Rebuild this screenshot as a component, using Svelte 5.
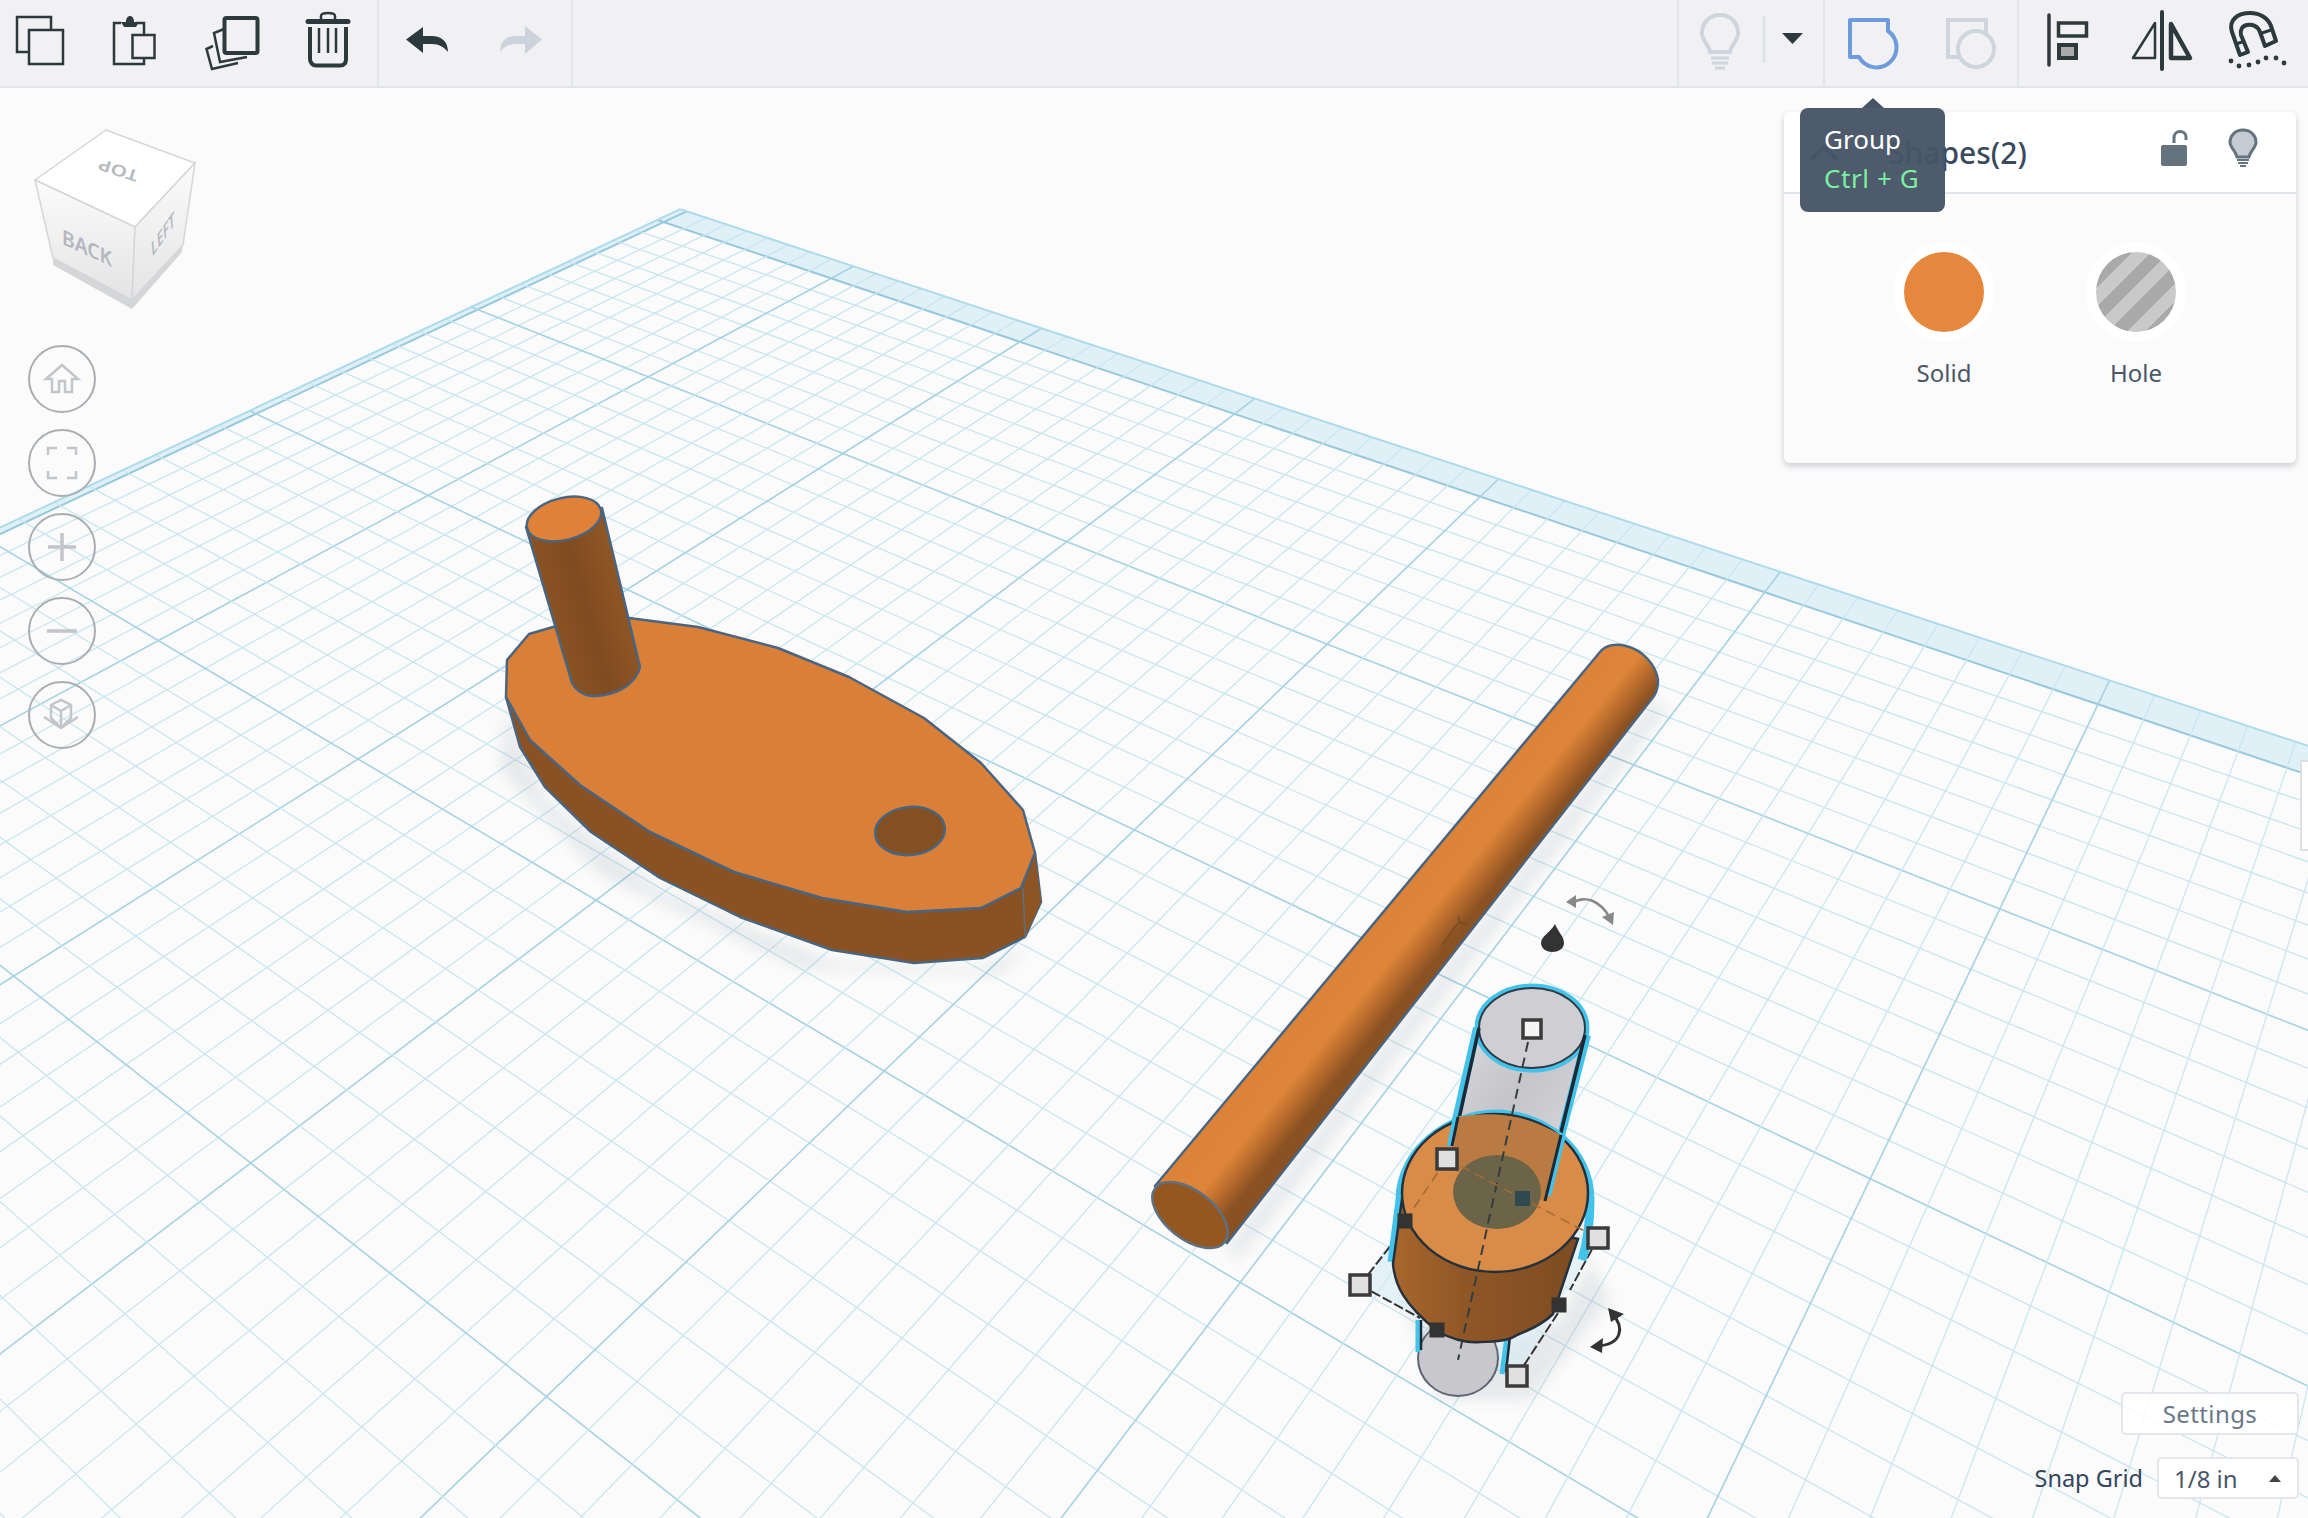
<script>
	// grid coordinates (in major cells) -> screen px, read off the reference
	const marks = [
		[0, 0, 668, 221],
		[1, 0, 825, 275], [4, 0, 1478, 496], [5, 0, 1764, 595], [6, 0, 2099, 708],
		[0, 1, 482, 309], [1, 1, 643, 372], [5, 1, 1634, 764], [6, 1, 2004, 911],
		[0, 2, 260, 415], [1, 2, 423, 487], [6, 2, 1878, 1177],
		[0, 3, -18, 551],
		[1, 3, 153, 629], [2, 3, 350, 752], [3, 3, 600, 890], [4, 3, 893, 1063],
		[2, 4, 13, 962], [3, 4, 256, 1151], [4, 4, 558, 1386]
	];

	// the plane's two visible edges count for more, they are what the eye checks
	const edges = marks.filter(([u, v]) => u === 0 || v === 0);

	function fit(pairs) {
		const n = 8;
		const m = Array.from({ length: n }, () => Array(n + 1).fill(0));
		for (const [u, v, x, y] of pairs) {
			const rows = [
				[u, v, 1, 0, 0, 0, -u * x, -v * x, x],
				[0, 0, 0, u, v, 1, -u * y, -v * y, y]
			];
			for (const r of rows)
				for (let i = 0; i < n; i++) for (let j = 0; j <= n; j++) m[i][j] += r[i] * r[j];
		}
		for (let i = 0; i < n; i++) {
			let p = i;
			for (let k = i + 1; k < n; k++) if (Math.abs(m[k][i]) > Math.abs(m[p][i])) p = k;
			[m[i], m[p]] = [m[p], m[i]];
			for (let k = 0; k < n; k++) {
				if (k === i) continue;
				const f = m[k][i] / m[i][i];
				for (let j = i; j <= n; j++) m[k][j] -= f * m[i][j];
			}
		}
		return m.map((r, i) => r[n] / r[i]);
	}

	const h = fit([...marks, ...edges, ...edges, ...edges, ...edges, ...edges]);
	const weight = (u, v) => h[6] * u + h[7] * v + 1;
	const project = (u, v) => {
		const w = weight(u, v);
		return [(h[0] * u + h[1] * v + h[2]) / w, (h[3] * u + h[4] * v + h[5]) / w];
	};
	const quad = (pts) => pts.map(([u, v]) => project(u, v).map((n) => n.toFixed(1)).join(',')).join(' ');

	const cell = 1 / 8;
	const minW = 0.07;
	// the rim is wider along the far edge than along the left one
	const rimU = -0.04;
	const rimV = -0.135;
	const gridLines = [];
	for (let i = 0; i <= 14 * 8; i++) {
		const t = i * cell;
		const kind = i === 0 ? 'edge' : i % 8 === 0 ? 'major' : 'minor';
		const vEnd = Math.min(9, (minW - 1 - h[6] * t) / h[7]);
		if (vEnd > rimV) {
			const [x1, y1] = project(t, rimV);
			const [x2, y2] = project(t, vEnd);
			gridLines.push({ x1, y1, x2, y2, kind });
		}
		const uEnd = Math.min(14, (minW - 1 - h[7] * t) / h[6]);
		if (uEnd > rimU && i <= 9 * 8) {
			const [x1, y1] = project(rimU, t);
			const [x2, y2] = project(uEnd, t);
			gridLines.push({ x1, y1, x2, y2, kind });
		}
	}

	const bandTop = quad([[rimU, rimV], [11, rimV], [11, 0], [0, 0]]);
	const bandLeft = quad([[rimU, rimV], [0, 0], [0, 5.5], [rimU, 5.5]]);
	const outerA = project(rimU, rimV);
	const outerB = project(11, rimV);
	const outerC = project(rimU, 5.5);

	const whiteHandles = [[1447, 1159], [1598, 1238], [1360, 1285], [1517, 1376]];
	const darkHandles = [[1405, 1221], [1437, 1330], [1559, 1305]];
	const magnetDots = [[2231, 61], [2239, 66], [2249, 65], [2258, 62], [2266, 58], [2276, 58], [2284, 63]];
</script>

<div class="app">
	<header class="toolbar">
		<div class="group edit">
			<button aria-label="Copy">
				<svg class="icon" viewBox="8 0 64 86">
					<rect x="17" y="17" width="34" height="35" class="line" />
					<rect x="29" y="30" width="34" height="34" class="line filled" />
				</svg>
			</button>
			<button aria-label="Paste">
				<svg class="icon" viewBox="102 0 64 86">
					<path d="M121 23H114V64H144V58" class="line" />
					<path d="M144 34V23H136" class="line" />
					<path d="M121 22H126C126 14 134 14 134 22H139L136 27H124Z" fill="#2c3a3d" />
					<rect x="132.500" y="35" width="22" height="23" class="line filled" />
				</svg>
			</button>
			<button aria-label="Duplicate">
				<svg class="icon" viewBox="196 0 64 86">
					<path d="M213 46L206.500 49L212 69L238 63" class="line" />
					<path d="M224 29L214 33L220 62L247 57" class="line filled" />
					<rect x="224.500" y="18" width="33" height="35" rx="2" class="thick filled" />
				</svg>
			</button>
			<button aria-label="Delete">
				<svg class="icon" viewBox="290 0 64 86">
					<path d="M321 20V16C321 12 335 12 335 16V20" class="line" />
					<path d="M308 21.500H348" fill="none" stroke="#2c3a3d" stroke-width="5" stroke-linecap="round" />
					<path d="M310 27V59C310 63 313 65.500 316 65.500H340C344 65.500 346 63 346 59V27" class="thick" />
					<path d="M319 28V53M328 28V53M336 28V53" fill="none" stroke="#2c3a3d" stroke-width="2.500" />
				</svg>
			</button>
		</div>
		<div class="group history">
			<button aria-label="Undo">
				<svg class="icon" viewBox="394 0 64 86">
					<path d="M423 27L406 39.500L423 53V44H432C439 44 444 47 448 52C448 41 441 36 432 36H423Z" fill="#2c3a3d" />
				</svg>
			</button>
			<button aria-label="Redo">
				<svg class="icon" viewBox="488 0 64 86">
					<path d="M525 26L542 39.500L525 54V44H516C509 44 504 47 500 52C500 41 507 36 516 36H525Z" fill="#ccd3dc" />
				</svg>
			</button>
		</div>
		<div class="spacer"></div>
		<div class="group notes">
			<button aria-label="Notes">
				<svg class="icon" viewBox="1688 0 64 86">
					<path d="M1720 15C1709 15 1702 23 1702 33C1702 41 1709 45 1710 52H1730C1731 45 1738 41 1738 33C1738 23 1731 15 1720 15Z" fill="none" stroke="#cdd5de" stroke-width="4" />
					<path d="M1711 58H1729M1712 63H1728M1715 68H1725" fill="none" stroke="#cdd5de" stroke-width="3" />
				</svg>
			</button>
			<button aria-label="Notes menu">
				<svg class="icon wide" viewBox="1752 0 71 86">
					<rect x="1762.500" y="16" width="3" height="47" rx="1.500" fill="#dde2e8" />
					<path d="M1782 33H1803L1792.500 44Z" fill="#2c3a3d" />
				</svg>
			</button>
		</div>
		<div class="group grouping">
			<button aria-label="Group">
				<svg class="icon" viewBox="1841 0 64 86">
					<path d="M1850 20H1888V31A20 20 0 1 1 1859 57H1850Z" fill="none" stroke="#6d9bdc" stroke-width="4" stroke-linejoin="round" />
				</svg>
			</button>
			<button aria-label="Ungroup">
				<svg class="icon" viewBox="1940 0 64 86">
					<rect x="1948" y="20" width="38" height="37" fill="none" stroke="#cdd5de" stroke-width="4" />
					<circle cx="1976" cy="49" r="18" fill="#f1f1f3" stroke="#cdd5de" stroke-width="4" />
				</svg>
			</button>
		</div>
		<div class="group arrange">
			<button aria-label="Align">
				<svg class="icon" viewBox="2039 0 64 86">
					<path d="M2049 15V65" fill="none" stroke="#2c3a3d" stroke-width="3.500" stroke-linecap="round" />
					<rect x="2058.500" y="23" width="28" height="13" fill="none" stroke="#2c3a3d" stroke-width="3.500" />
					<rect x="2059" y="45" width="17" height="13" fill="#aaaaaa" stroke="#2c3a3d" stroke-width="4" />
				</svg>
			</button>
			<button aria-label="Mirror">
				<svg class="icon" viewBox="2131 0 64 86">
					<path d="M2162 12V69" fill="none" stroke="#2c3a3d" stroke-width="4" stroke-linecap="round" />
					<path d="M2155 23L2133 58H2155Z" fill="none" stroke="#2c3a3d" stroke-width="2.500" stroke-linejoin="round" />
					<path d="M2171 24L2190 58H2171Z" fill="none" stroke="#2c3a3d" stroke-width="4.500" stroke-linejoin="round" />
				</svg>
			</button>
			<button aria-label="Snap">
				<svg class="icon" viewBox="2223 0 64 86">
					<path d="M2240 55L2232 32C2228 19 2239 13 2250 13C2260 13 2268 18 2271 26L2276 41L2265 46L2260 32C2258 26 2252 24 2247 25C2242 26 2240 30 2241 35L2248 52Z" fill="none" stroke="#2c3a3d" stroke-width="4" stroke-linejoin="round" />
					<path d="M2236 44L2245 41M2259 34L2271 30" fill="none" stroke="#2c3a3d" stroke-width="3" />
					{#each magnetDots as [cx, cy]}
						<circle {cx} {cy} r="2.400" fill="#2c3a3d" />
					{/each}
				</svg>
			</button>
		</div>
	</header>

	<main class="stage">
		<svg class="scene" viewBox="0 88 2308 1430">
			<defs>
				<linearGradient id="rod" gradientUnits="userSpaceOnUse" x1="1378" y1="920" x2="1432" y2="964">
					<stop offset="0" stop-color="#dc8338" />
					<stop offset="0.5" stop-color="#de8539" />
					<stop offset="0.72" stop-color="#bc6e2e" />
					<stop offset="1" stop-color="#8a5122" />
				</linearGradient>
				<linearGradient id="peg" gradientUnits="userSpaceOnUse" x1="535" y1="600" x2="625" y2="575">
					<stop offset="0" stop-color="#8e5524" />
					<stop offset="0.5" stop-color="#7f4b20" />
					<stop offset="1" stop-color="#935825" />
				</linearGradient>
				<linearGradient id="disk" gradientUnits="userSpaceOnUse" x1="1393" y1="1300" x2="1578" y2="1300">
					<stop offset="0" stop-color="#a8672c" />
					<stop offset="0.4" stop-color="#8f5626" />
					<stop offset="1" stop-color="#7d4c22" />
				</linearGradient>
				<linearGradient id="tube" gradientUnits="userSpaceOnUse" x1="1470" y1="1060" x2="1560" y2="1120">
					<stop offset="0" stop-color="#d2d2d6" />
					<stop offset="0.5" stop-color="#c4c4c9" />
					<stop offset="1" stop-color="#d0d0d4" />
				</linearGradient>
				<linearGradient id="cubeface" x1="0" y1="0" x2="0" y2="1">
					<stop offset="0" stop-color="#fbfbfb" />
					<stop offset="1" stop-color="#e4e4e6" />
				</linearGradient>
			</defs>

			<polygon points={bandTop} class="band" />
			<polygon points={bandLeft} class="band" />
			{#each gridLines as l}
				<line x1={l.x1} y1={l.y1} x2={l.x2} y2={l.y2} class={l.kind} />
			{/each}
			<line x1={outerA[0]} y1={outerA[1]} x2={outerB[0]} y2={outerB[1]} class="rim" />
			<line x1={outerA[0]} y1={outerA[1]} x2={outerC[0]} y2={outerC[1]} class="rim" />

			<!-- soft shadows on the floor -->
			<polygon class="soft" points="506,705 545,800 660,890 832,962 983,968 1030,945 1000,975 800,968 600,875 500,770" />
			<polygon class="soft" points="1654,700 1225,1250 1240,1258 1668,708" />
			<polygon class="soft" points="1400,1290 1480,1355 1560,1320 1590,1260 1610,1300 1530,1400 1440,1400" />

			<!-- flat disk with peg and hole -->
			<polygon class="outline" fill="#8a5222" points="506,697 520,747 545,787 591,832 660,878 740,917 832,950 914,963 983,958 1025,937 1041,902 1035,853 1021,888 981,908 907,912 822,898 734,872 650,832 580,785 530,740" />
			<polygon fill="#8e5524" points="1023,888 1035,853 1041,902 1025,937" />
			<line x1="1023" y1="888" x2="1025" y2="937" stroke="#5d6f80" stroke-width="1.500" />
			<polygon class="outline" fill="#da7f37" points="529,634 507,660 506,697 530,740 580,785 650,832 734,872 822,898 907,912 981,908 1021,888 1035,853 1023,810 981,763 924,718 849,677 778,648 698,627 629,618 553,627" />
			<ellipse class="outline" cx="910" cy="831" rx="35" ry="24" fill="#845022" transform="rotate(-6 910 831)" />
			<path class="outline" fill="url(#peg)" d="M526 527L572 683C580 697 592 697 604 695C622 692 636 682 640 667L602 508Z" />
			<ellipse class="outline" cx="564" cy="519" rx="38" ry="21" fill="#df8237" transform="rotate(-14 564 519)" />

			<!-- long rod -->
			<path class="outline" fill="url(#rod)" d="M1155 1186L1600 652C1606 645 1616 643 1626 646C1642 650 1656 664 1658 680C1658 688 1656 693 1654 696L1227 1243Z" />
			<ellipse cx="1190" cy="1215" rx="44" ry="24" fill="#94571f" stroke="#5f7083" stroke-width="2.500" transform="rotate(38 1190 1215)" />
			<path d="M1442 945C1450 936 1452 928 1460 922M1460 922L1466 925M1460 922L1458 916" fill="none" stroke="#6a4522" stroke-width="1.800" opacity="0.6" />

			<!-- selection footprint -->
			<polygon points="1360,1285 1447,1159 1598,1238 1517,1376" fill="#d6ebf5" opacity="0.6" />
			<path d="M1360 1285L1395 1240M1360 1285L1420 1318M1517 1376L1560 1310M1598 1238L1570 1290" fill="none" stroke="#333" stroke-width="2" stroke-dasharray="10 3" />

			<!-- lower stub of the selected hole -->
			<ellipse cx="1458" cy="1358" rx="40" ry="38" fill="#c8c8cc" stroke="#5d6672" stroke-width="2" />
			<path d="M1418 1320V1352M1507 1336L1502 1374" fill="none" stroke="#44c3ea" stroke-width="5" />
			<path d="M1421 1320V1350M1510 1336L1506 1372" fill="none" stroke="#1b2a36" stroke-width="2.500" />

			<!-- selected tube behind the disk -->
			<path fill="url(#tube)" d="M1478 1028L1452 1146L1545 1201L1585 1035Z" />
			<ellipse cx="1532" cy="1028" rx="53" ry="40" fill="#cfcfd3" stroke="#44c3ea" stroke-width="9" />
			<path d="M1477 1028L1450 1146M1587 1035L1546 1194" fill="none" stroke="#44c3ea" stroke-width="8" />
			<ellipse cx="1532" cy="1028" rx="53" ry="40" fill="#cfcfd3" stroke="#2e3a46" stroke-width="2" />
			<path d="M1479 1028L1453 1146M1585 1035L1544 1201" fill="none" stroke="#1b2a36" stroke-width="3.500" />

			<!-- cut disk -->
			<path d="M1400 1200C1400 1150 1450 1114 1495 1114C1545 1114 1590 1150 1590 1200C1590 1220 1588 1240 1582 1260M1400 1200L1392 1262" fill="none" stroke="#44c3ea" stroke-width="9" />
			<path fill="url(#disk)" stroke="#24313c" stroke-width="2.500" d="M1402 1199L1393 1264C1395 1285 1403 1303 1437 1331C1455 1341 1470 1343 1480 1342C1495 1342 1510 1340 1517 1335C1535 1328 1545 1322 1553 1314L1578 1239Z" />
			<ellipse cx="1495" cy="1193" rx="93" ry="79" fill="#d98c48" stroke="#24313c" stroke-width="2.500" />
			<path d="M1458 1117C1490 1111 1525 1114 1561 1135L1545 1201L1452 1170Z" fill="#b97b42" />
			<ellipse cx="1497" cy="1192" rx="44" ry="37" fill="#6b6448" />
			<path d="M1455 1117L1449 1146M1564 1135L1549 1196" fill="none" stroke="#44c3ea" stroke-width="4" />
			<path d="M1458 1117L1452 1146M1561 1135L1545 1201" fill="none" stroke="#1b2a36" stroke-width="3" />

			<!-- gizmo dashes and handles -->
			<path d="M1528 1042L1458 1360" fill="none" stroke="#333d40" stroke-width="2" stroke-dasharray="10 6" />
			<path d="M1447 1159L1598 1238" fill="none" stroke="#a86a35" stroke-width="1.500" stroke-dasharray="10 6" />
			<path d="M1405 1221L1447 1159" fill="none" stroke="#a86a35" stroke-width="1.500" stroke-dasharray="10 6" />
			{#each whiteHandles as [x, y]}
				<rect x={x - 10} y={y - 10} width="20" height="20" class="handle" />
			{/each}
			<rect x="1523" y="1020" width="18" height="18" class="handle hollow" />
			{#each darkHandles as [x, y]}
				<rect x={x - 7.5} y={y - 7.5} width="15" height="15" fill="#333" />
			{/each}
			<rect x="1515" y="1191" width="15" height="15" fill="#2f4a4e" />

			<!-- rotate arrows and lift cone -->
			<path d="M1572 903C1585 895 1600 900 1610 918" fill="none" stroke="#888" stroke-width="2.500" />
			<path d="M1566 902L1576 895L1576 908ZM1613 925L1602 917L1614 912Z" fill="#888" />
			<path d="M1555 924C1558 932 1564 936 1564 943C1564 949 1558 952 1552 952C1546 952 1541 948 1541 943C1541 936 1551 932 1555 924Z" fill="#333" />
			<path d="M1612 1313C1625 1328 1622 1344 1598 1346" fill="none" stroke="#333" stroke-width="3" />
			<path d="M1608 1308L1624 1314L1611 1322ZM1590 1347L1603 1338L1602 1353Z" fill="#333" />

			<!-- view cube -->
			<polygon points="53,258 132,300 183,245 182,252 132,309 53,265" fill="#d5d6d8" />
			<polygon points="106,130 195,163 135,227 35,180" fill="#ffffff" stroke="#d4d6d8" stroke-width="1.500" />
			<polygon points="35,180 135,227 132,300 53,258" fill="url(#cubeface)" stroke="#d4d6d8" stroke-width="1.500" />
			<polygon points="135,227 195,163 183,245 132,300" fill="url(#cubeface)" stroke="#d4d6d8" stroke-width="1.500" />
			<text class="cube-text" transform="translate(118 171) rotate(198) scale(1 0.75)" text-anchor="middle" dominant-baseline="central">TOP</text>
			<text class="cube-text" transform="matrix(0.92 0.42 0 1 87 247)" text-anchor="middle" dominant-baseline="central">BACK</text>
			<text class="cube-text" transform="matrix(0.5 -0.72 0.08 0.9 163 233)" text-anchor="middle" dominant-baseline="central">LEFT</text>
		</svg>

		<nav class="nav">
			<button aria-label="Home">
				<svg viewBox="0 0 40 40" width="40" height="40">
					<path d="M20 6L4 20H10V33H17V22H23V33H30V20H36Z" />
				</svg>
			</button>
			<button aria-label="Fit">
				<svg viewBox="0 0 40 40" width="40" height="40">
					<path d="M6 12V5H15M25 5H34V12M34 28V35H25M15 35H6V28" />
				</svg>
			</button>
			<button aria-label="Zoom in">
				<svg viewBox="0 0 40 40" width="40" height="40">
					<path d="M20 6V34M6 20H34" class="bold" />
				</svg>
			</button>
			<button aria-label="Zoom out">
				<svg viewBox="0 0 40 40" width="40" height="40">
					<path d="M5 20H35" class="bold" />
				</svg>
			</button>
			<button aria-label="Perspective">
				<svg viewBox="0 0 40 40" width="40" height="40">
					<path d="M19 5L9 10V23L19 33L29 23V10ZM9 10L19 16L29 10M19 16V33M2 22L19 33L36 22" />
				</svg>
			</button>
		</nav>

		<aside class="inspector">
			<div class="inspector-head">
				<svg class="chevron" viewBox="0 0 28 16" width="28" height="16">
					<path d="M2 15L14 3L26 15" />
				</svg>
				<span class="title">Shapes(2)</span>
				<svg class="lock" viewBox="0 0 28 38" width="28" height="38">
					<path d="M14 13V8C14 -1 26 0 26 7V10" fill="none" stroke="#65737f" stroke-width="3" />
					<rect x="1" y="15" width="26" height="21" rx="2" fill="#65737f" />
				</svg>
				<svg class="bulb" viewBox="0 0 30 40" width="30" height="40">
					<path d="M15 2C7 2 2 8 2 14C2 20 8 23 9 29H21C22 23 28 20 28 14C28 8 23 2 15 2Z" fill="#c5cbd2" stroke="#65737f" stroke-width="3" />
					<path d="M9 32H21M10 35H20M12 38H18" stroke="#65737f" stroke-width="2" />
				</svg>
			</div>
			<div class="kinds">
				<div class="kind">
					<span class="swatch"><span class="solid"></span></span>
					<span class="label">Solid</span>
				</div>
				<div class="kind">
					<span class="swatch"><span class="hole"></span></span>
					<span class="label">Hole</span>
				</div>
			</div>
		</aside>

		<div class="tooltip">
			<span class="tip-title">Group</span>
			<span class="tip-key">Ctrl + G</span>
		</div>

		<div class="side-tab"></div>

		<div class="grid-settings">
			<button class="settings">Settings</button>
			<div class="snap">
				<span class="snap-label">Snap Grid</span>
				<div class="select">
					<span>1/8 in</span>
					<i class="caret"></i>
				</div>
			</div>
		</div>
	</main>
</div>

<style>
	:global(body) {
		margin: 0;
		background: #fbfbfb;
		font-family: "Noto Sans", sans-serif;
	}

	.app {
		width: 2308px;
		height: 1518px;
		display: flex;
		flex-direction: column;
		overflow: hidden;
	}

	button {
		border: none;
		background: none;
		padding: 0;
		margin: 0;
		font: inherit;
		display: block;
	}

	.toolbar {
		height: 88px;
		box-sizing: border-box;
		flex: none;
		display: flex;
		background: #f1f1f3;
		border-bottom: 2px solid #e1e5ea;
	}

	.group {
		display: flex;
		height: 86px;
		box-sizing: border-box;
	}

	.icon {
		display: block;
		width: 64px;
		height: 86px;
	}

	.icon.wide {
		width: 71px;
	}

	.line {
		fill: none;
		stroke: #2c3a3d;
		stroke-width: 2.5;
	}

	.thick {
		fill: none;
		stroke: #2c3a3d;
		stroke-width: 4;
	}

	.filled {
		fill: #f1f1f3;
	}

	.edit {
		width: 379px;
		padding-left: 8px;
		gap: 30px;
		border-right: 2px solid #e1e5ea;
	}

	.history {
		width: 194px;
		padding-left: 15px;
		gap: 30px;
		border-right: 2px solid #e1e5ea;
	}

	.spacer {
		flex: 1;
	}

	.notes {
		width: 146px;
		padding-left: 9px;
		border-left: 2px solid #e1e5ea;
	}

	.grouping {
		width: 194px;
		padding-left: 16px;
		gap: 35px;
		border-left: 2px solid #e1e5ea;
	}

	.arrange {
		width: 291px;
		padding-left: 20px;
		gap: 28px;
		border-left: 2px solid #e1e5ea;
	}

	.stage {
		position: relative;
		flex: 1;
		overflow: hidden;
		background: #fbfbfb;
	}

	.scene {
		position: absolute;
		left: 0;
		top: 0;
		width: 2308px;
		height: 1430px;
	}

	.band {
		fill: #e0f0f7;
	}

	.minor {
		stroke: #c9e6f1;
		stroke-width: 1.3;
	}

	.major {
		stroke: #a5d2e4;
		stroke-width: 1.6;
	}

	.edge {
		stroke: #97c8dc;
		stroke-width: 2;
	}

	.rim {
		stroke: #aedbec;
		stroke-width: 2;
	}

	.soft {
		fill: #7f8a94;
		opacity: 0.16;
		filter: blur(7px);
	}

	.outline {
		stroke: #4a6580;
		stroke-width: 2.5;
		stroke-linejoin: round;
	}

	.handle {
		fill: #e0e0e0;
		stroke: #3a3a3a;
		stroke-width: 3.5;
	}

	.handle.hollow {
		fill: #f4f4f4;
	}

	.cube-text {
		font-size: 21px;
		font-weight: 600;
		fill: #b4b8c0;
	}

	.nav {
		position: absolute;
		left: 28px;
		top: 257px;
		display: flex;
		flex-direction: column;
		gap: 16px;
	}

	.nav button {
		width: 68px;
		height: 68px;
		box-sizing: border-box;
		border: 2px solid #a9aeb3;
		border-radius: 50%;
		display: flex;
		align-items: center;
		justify-content: center;
	}

	.nav path {
		fill: none;
		stroke: #c2c5c9;
		stroke-width: 2.5;
	}

	.nav path.bold {
		stroke-width: 3.5;
	}

	.inspector {
		position: absolute;
		left: 1784px;
		top: 24px;
		width: 512px;
		height: 351px;
		background: #fbfbfb;
		border-radius: 6px;
		box-shadow: 0 3px 6px rgba(90, 100, 120, 0.3);
	}

	.inspector-head {
		height: 82px;
		box-sizing: border-box;
		display: flex;
		align-items: center;
		background: #fff;
		border-bottom: 2px solid #e1e6ec;
		border-radius: 6px 6px 0 0;
		padding-left: 26px;
	}

	.chevron {
		margin-right: 50px;
	}

	.chevron path {
		fill: none;
		stroke: #3a4a5e;
		stroke-width: 4;
	}

	.title {
		font-size: 30px;
		font-weight: 500;
		color: #3a4a5e;
		flex: 1;
	}

	.lock {
		margin-right: 40px;
		margin-top: -6px;
	}

	.bulb {
		margin-right: 38px;
		margin-top: -8px;
	}

	.kinds {
		display: flex;
		gap: 92px;
		padding: 48px 0 0 110px;
	}

	.kind {
		width: 100px;
		display: flex;
		flex-direction: column;
		align-items: center;
		gap: 14px;
	}

	.swatch {
		width: 100px;
		height: 100px;
		box-sizing: border-box;
		padding: 10px;
		border-radius: 50%;
		background: #fff;
	}

	.solid,
	.hole {
		display: block;
		width: 80px;
		height: 80px;
		border-radius: 50%;
	}

	.solid {
		background: #e5873c;
	}

	.hole {
		background: repeating-linear-gradient(135deg, #c9c9c9 0 13px, #a9a9a9 13px 26px);
	}

	.label {
		font-size: 24px;
		line-height: 33px;
		color: #4a5666;
	}

	.tooltip {
		position: absolute;
		left: 1800px;
		top: 20px;
		width: 145px;
		height: 104px;
		box-sizing: border-box;
		padding: 12px 0 0 24px;
		display: flex;
		flex-direction: column;
		border-radius: 8px;
		background: rgba(70, 84, 102, 0.96);
	}

	.tooltip::before {
		content: "";
		position: absolute;
		left: 62px;
		top: -10px;
		border: 11px solid transparent;
		border-top: none;
		border-bottom: 10px solid #465466;
	}

	.tip-title,
	.tip-key {
		font-size: 26px;
		line-height: 39px;
	}

	.tip-title {
		color: #fff;
	}

	.tip-key {
		color: #7bf0a0;
		letter-spacing: 0.6px;
	}

	.side-tab {
		position: absolute;
		left: 2300px;
		top: 672px;
		width: 12px;
		height: 91px;
		box-sizing: border-box;
		background: #fff;
		border: 2px solid #dde0e4;
	}

	.grid-settings {
		position: absolute;
		right: 9px;
		top: 1304px;
		display: flex;
		flex-direction: column;
		align-items: flex-end;
		gap: 22px;
	}

	.settings {
		width: 178px;
		height: 43px;
		box-sizing: border-box;
		border: 2px solid #e3e7ec;
		border-radius: 5px;
		background: rgba(255, 255, 255, 0.85);
		font-size: 24px;
		line-height: 36px;
		letter-spacing: 0.4px;
		color: #6a7888;
	}

	.snap {
		display: flex;
		align-items: center;
		gap: 14px;
	}

	.snap-label {
		font-size: 23.5px;
		color: #34465c;
	}

	.select {
		width: 142px;
		height: 42px;
		box-sizing: border-box;
		padding: 0 16px 0 15px;
		border: 2px solid #e3e7ec;
		border-radius: 5px;
		background: #fff;
		display: flex;
		align-items: center;
		justify-content: space-between;
		font-size: 24px;
		color: #4a5666;
	}

	.caret {
		border: 6px solid transparent;
		border-top: none;
		border-bottom: 7px solid #444;
	}
</style>
